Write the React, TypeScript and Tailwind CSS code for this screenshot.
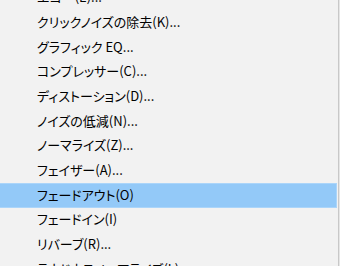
import React from "react";

const items: { label: string; active?: boolean }[] = [
  { label: "エコー(E)..." },
  { label: "クリックノイズの除去(K)..." },
  { label: "グラフィック EQ..." },
  { label: "コンプレッサー(C)..." },
  { label: "ディストーション(D)..." },
  { label: "ノイズの低減(N)..." },
  { label: "ノーマライズ(Z)..." },
  { label: "フェイザー(A)..." },
  { label: "フェードアウト(O)", active: true },
  { label: "フェードイン(I)" },
  { label: "リバーブ(R)..." },
  { label: "ラウドネスノーマライズ(L)..." },
];

export default function App() {
  return (
    <div className="w-[340px] h-[266px] overflow-hidden bg-[#f2f2f2] flex">
      <div className="w-[338px] h-full flex flex-col mt-[-14.4px]">
        {items.map((it) => (
          <div
            key={it.label}
            className={
              it.active
                ? "h-[24.67px] shrink-0 mr-[1px] flex items-center pl-[37px] pb-[2px] bg-[#93c9f8] border border-[#abd5fa] border-l-0"
                : "h-[24.67px] shrink-0 mr-[1px] flex items-center pl-[37px] pb-[2px]"
            }
          >
            <span
              className="text-[13px] leading-none text-black whitespace-nowrap [font-feature-settings:'palt']"
              style={{ fontFamily: '"Noto Sans CJK JP", "Noto Sans", sans-serif' }}
            >
              {it.label}
            </span>
          </div>
        ))}
      </div>
      <div className="w-[1px] h-full bg-[#c8c8c8]" />
      <div className="w-[1px] h-full bg-[#e6e6e6]" />
    </div>
  );
}
